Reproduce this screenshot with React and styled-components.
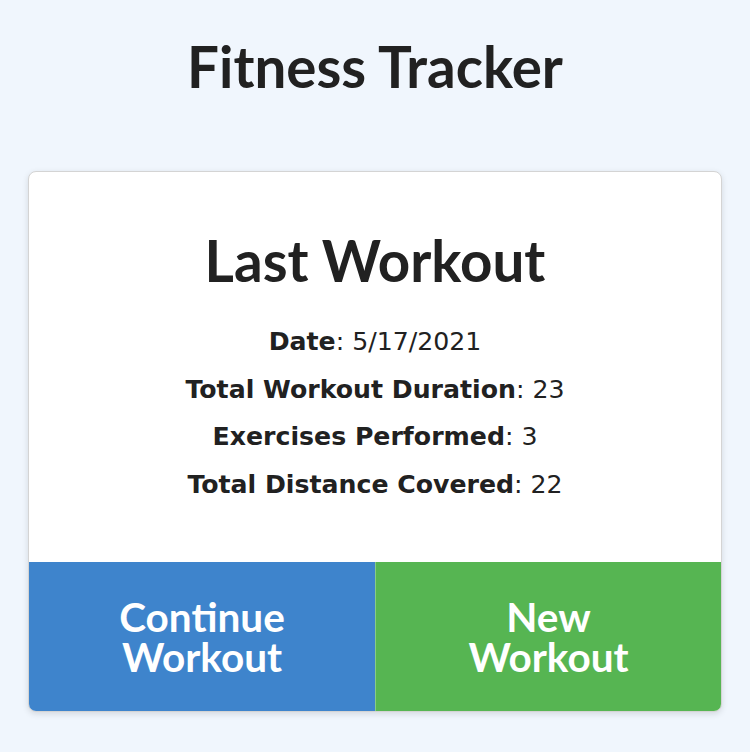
import React from "react";
import styled, { createGlobalStyle } from "styled-components";

const GlobalStyle = createGlobalStyle`
  body {
    margin: 0;
    background: #f0f6fd;
    font-family: Lato, "Noto Sans", sans-serif;
    color: #212121;
  }
`;

const Page = styled.div`
  display: flex;
  flex-direction: column;
  align-items: center;
  padding: 26px 28px 40px;
`;

const Title = styled.h1`
  margin: 0 0 65px;
  font-size: 56.5px;
  font-weight: 700;
  line-height: 80px;
`;

const Card = styled.div`
  width: 100%;
  box-sizing: border-box;
  background: #fff;
  border: 1px solid #d4d4d4;
  border-radius: 8px;
  box-shadow: 0 2px 6px rgba(0, 0, 0, 0.12);
  overflow: hidden;
  display: flex;
  flex-direction: column;
`;

const CardBody = styled.div`
  padding: 48px 20px 54px;
  text-align: center;
`;

const CardTitle = styled.h2`
  margin: 0 0 18px;
  font-size: 56.5px;
  font-weight: 700;
  line-height: 80px;
`;

const Stat = styled.p`
  margin: 0;
  font-family: "DejaVu Sans", Verdana, sans-serif;
  font-size: 25.2px;
  line-height: 47.5px;
  b {
    font-weight: 700;
  }
`;

const Actions = styled.div`
  display: grid;
  grid-template-columns: 1fr 1fr;
`;

const ActionButton = styled.button`
  height: 149px;
  border: none;
  background: ${(p) => p.$bg};
  color: #fff;
  font-family: Lato, "Noto Sans", sans-serif;
  font-size: 40.5px;
  font-weight: 700;
  cursor: pointer;
  border-left: ${(p) => (p.$divider ? "1px solid rgba(255,255,255,0.3)" : "none")};
`;

const Line = styled.span`
  display: block;
  line-height: 40px;
`;

const stats = [
  ["Date", "5/17/2021"],
  ["Total Workout Duration", "23"],
  ["Exercises Performed", "3"],
  ["Total Distance Covered", "22"],
];

export default function App() {
  return (
    <Page>
      <GlobalStyle />
      <Title>Fitness Tracker</Title>
      <Card>
        <CardBody>
          <CardTitle>Last Workout</CardTitle>
          {stats.map(([label, value]) => (
            <Stat key={label}>
              <b>{label}</b>: {value}
            </Stat>
          ))}
        </CardBody>
        <Actions>
          <ActionButton $bg="#3e84cc">
            <Line>Continue</Line>
            <Line>Workout</Line>
          </ActionButton>
          <ActionButton $bg="#56b552" $divider>
            <Line>New</Line>
            <Line>Workout</Line>
          </ActionButton>
        </Actions>
      </Card>
    </Page>
  );
}
